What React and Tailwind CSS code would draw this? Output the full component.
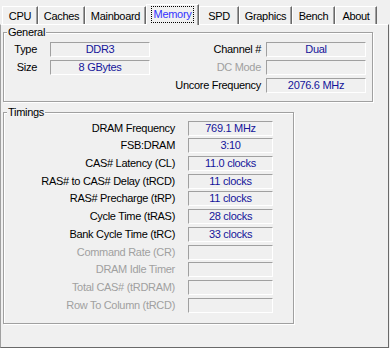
import React from "react";

const font = { fontFamily: '"Liberation Sans", Arial, sans-serif' };

function Field({ w, children }) {
  return (
    <div
      className={
        "h-[15px] shrink-0 flex items-center justify-center border border-t-[#a0a0a0] border-l-[#a0a0a0] border-b-white border-r-white text-[#14149a] leading-none " +
        w
      }
    >
      {children}
    </div>
  );
}

function Group({ title, className, children }) {
  return (
    <div
      className={
        "relative border border-[#a0a0a0] shadow-[inset_1px_1px_0_#ffffff,1px_1px_0_#ffffff] " +
        className
      }
    >
      <span className="absolute top-[-8px] left-[3px] bg-[#f0f0f0] px-[1px] leading-[14px] text-black">
        {title}
      </span>
      {children}
    </div>
  );
}

const tabs = [
  { label: "CPU", w: "w-[36px]" },
  { label: "Caches", w: "w-[47px]" },
  { label: "Mainboard", w: "w-[61px]" },
  { label: "Memory", w: "w-[53px]", active: true },
  { label: "SPD", w: "w-[40px]" },
  { label: "Graphics", w: "w-[53px]" },
  { label: "Bench", w: "w-[43px]" },
  { label: "About", w: "w-[42px]" },
];

const timings = [
  ["DRAM Frequency", "769.1 MHz", false, "mt-0"],
  ["FSB:DRAM", "3:10", false, "mt-[2px]"],
  ["CAS# Latency (CL)", "11.0 clocks", false, "mt-[3px]"],
  ["RAS# to CAS# Delay (tRCD)", "11 clocks", false, "mt-[3px]"],
  ["RAS# Precharge (tRP)", "11 clocks", false, "mt-[2px]"],
  ["Cycle Time (tRAS)", "28 clocks", false, "mt-[3px]"],
  ["Bank Cycle Time (tRC)", "33 clocks", false, "mt-[3px]"],
  ["Command Rate (CR)", "", true, "mt-[3px]"],
  ["DRAM Idle Timer", "", true, "mt-[2px]"],
  ["Total CAS# (tRDRAM)", "", true, "mt-[3px]"],
  ["Row To Column (tRCD)", "", true, "mt-[3px]"],
];

export default function App() {
  return (
    <div
      className="w-[390px] h-[348px] bg-[#f0f0f0] text-[11px] tracking-[-0.3px] text-black overflow-hidden"
      style={font}
    >
      {/* Tab strip */}
      <div className="h-[24px] flex items-end pl-[2px]">
        {tabs.map((t) =>
          t.active ? (
            <div
              key={t.label}
              className={
                "relative z-10 h-[21px] mb-[-1px] bg-[#f0f0f0] border-t border-l border-t-white border-l-white border-r border-r-[#696969] shadow-[inset_-1px_0_0_#a0a0a0] flex items-start justify-center pt-[1px] " +
                t.w
              }
            >
              <span className="border border-dotted border-black px-[2px] h-[17px] flex items-center text-[#3333ff] leading-none">
                {t.label}
              </span>
            </div>
          ) : (
            <div
              key={t.label}
              className={
                "h-[18px] bg-[#f0f0f0] border-t border-l border-t-white border-l-white border-r border-r-[#696969] shadow-[inset_-1px_0_0_#a0a0a0] flex items-center justify-center pt-[1px] leading-none " +
                t.w
              }
            >
              {t.label}
            </div>
          )
        )}
      </div>

      {/* Panel */}
      <div className="w-[389px] h-[324px] border-t border-l border-t-white border-l-[#a0a0a0] border-r border-b border-r-[#696969] border-b-[#696969] pl-[2px] pt-[7px]">
        <Group title="General" className="w-[370px] pt-[9px] pb-[8px]">
          <div className="flex flex-col gap-[3px]">
            <div className="flex items-center h-[15px]">
              <div className="w-[33px] text-right">Type</div>
              <div className="w-[13px]" />
              <Field w="w-[100px]">DDR3</Field>
              <div className="w-[111px] text-right">Channel #</div>
              <div className="w-[5px]" />
              <Field w="w-[100px]">Dual</Field>
            </div>
            <div className="flex items-center h-[15px]">
              <div className="w-[33px] text-right">Size</div>
              <div className="w-[13px]" />
              <Field w="w-[100px]">8 GBytes</Field>
              <div className="w-[111px] text-right text-[#a0a0a0]">DC Mode</div>
              <div className="w-[5px]" />
              <Field w="w-[100px]"></Field>
            </div>
            <div className="flex items-center h-[15px]">
              <div className="w-[146px]" />
              <div className="w-[111px] text-right">Uncore Frequency</div>
              <div className="w-[5px]" />
              <Field w="w-[100px]">2076.6 MHz</Field>
            </div>
          </div>
        </Group>

        <Group title="Timings" className="w-[291px] mt-[10px] pt-[8px] pb-[10px]">
          <div className="flex flex-col">
            {timings.map(([label, value, disabled, mt]) => (
              <div key={label} className={"flex items-center h-[15px] " + mt}>
                <div
                  className={
                    disabled
                      ? "w-[171px] text-right text-[#a0a0a0] whitespace-nowrap"
                      : "w-[171px] text-right whitespace-nowrap"
                  }
                >
                  {label}
                </div>
                <div className="w-[13px]" />
                <Field w="w-[85px]">{value}</Field>
              </div>
            ))}
          </div>
        </Group>
      </div>
    </div>
  );
}
